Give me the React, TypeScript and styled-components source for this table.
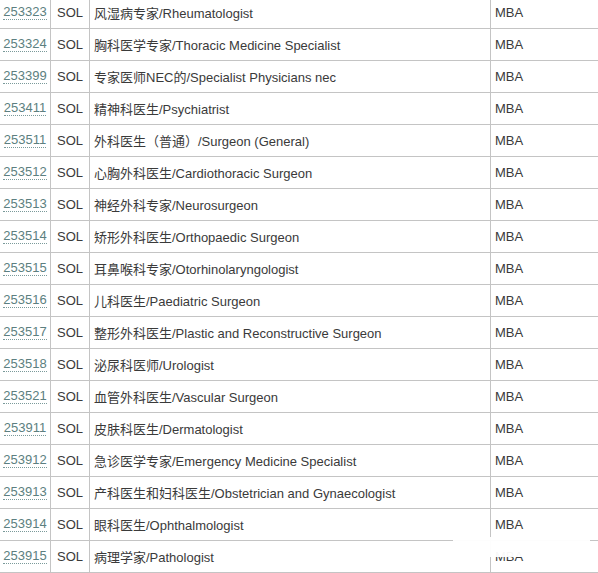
import styled, { createGlobalStyle } from 'styled-components';

const GlobalStyle = createGlobalStyle`
  html, body {
    margin: 0;
    padding: 0;
    background: #fff;
    overflow: hidden;
  }
`;

const Page = styled.div`
  position: relative;
  width: 598px;
  height: 573px;
  overflow: hidden;
  font-family: 'Liberation Sans', Arial, 'Noto Sans CJK SC', sans-serif;
  font-size: 13px;
  color: #3a3a3a;
`;

const Table = styled.div`
  margin-top: -3px;
  width: 640px;
`;

const Row = styled.div`
  display: grid;
  grid-template-columns: 51px 39px 401px 1fr;
  height: 32px;
  box-sizing: border-box;
  border-bottom: 1px solid #c4c4c4;
`;

const Cell = styled.div<{ $center?: boolean; $last?: boolean }>`
  display: flex;
  align-items: center;
  justify-content: ${(p) => (p.$center ? 'center' : 'flex-start')};
  padding-left: ${(p) => (p.$center ? '0' : '4px')};
  box-sizing: border-box;
  border-right: ${(p) => (p.$last ? 'none' : '1px solid #c4c4c4')};
  white-space: nowrap;
`;

const Code = styled.a`
  color: #5c7f80;
  text-decoration: none;
  border-bottom: 1px dotted #7a9a9a;
  line-height: 14px;
`;

const Watermark = styled.div`
  position: absolute;
  left: 453px;
  top: 537px;
  width: 137px;
  height: 20px;
  background: rgba(255, 255, 255, 0.96);
`;

type Occupation = {
  code: string;
  list: string;
  title: string;
  visa: string;
};

const occupations: Occupation[] = [
  { code: '253323', list: 'SOL', title: '风湿病专家/Rheumatologist', visa: 'MBA' },
  { code: '253324', list: 'SOL', title: '胸科医学专家/Thoracic Medicine Specialist', visa: 'MBA' },
  { code: '253399', list: 'SOL', title: '专家医师NEC的/Specialist Physicians nec', visa: 'MBA' },
  { code: '253411', list: 'SOL', title: '精神科医生/Psychiatrist', visa: 'MBA' },
  { code: '253511', list: 'SOL', title: '外科医生（普通）/Surgeon (General)', visa: 'MBA' },
  { code: '253512', list: 'SOL', title: '心胸外科医生/Cardiothoracic Surgeon', visa: 'MBA' },
  { code: '253513', list: 'SOL', title: '神经外科专家/Neurosurgeon', visa: 'MBA' },
  { code: '253514', list: 'SOL', title: '矫形外科医生/Orthopaedic Surgeon', visa: 'MBA' },
  { code: '253515', list: 'SOL', title: '耳鼻喉科专家/Otorhinolaryngologist', visa: 'MBA' },
  { code: '253516', list: 'SOL', title: '儿科医生/Paediatric Surgeon', visa: 'MBA' },
  { code: '253517', list: 'SOL', title: '整形外科医生/Plastic and Reconstructive Surgeon', visa: 'MBA' },
  { code: '253518', list: 'SOL', title: '泌尿科医师/Urologist', visa: 'MBA' },
  { code: '253521', list: 'SOL', title: '血管外科医生/Vascular Surgeon', visa: 'MBA' },
  { code: '253911', list: 'SOL', title: '皮肤科医生/Dermatologist', visa: 'MBA' },
  { code: '253912', list: 'SOL', title: '急诊医学专家/Emergency Medicine Specialist', visa: 'MBA' },
  { code: '253913', list: 'SOL', title: '产科医生和妇科医生/Obstetrician and Gynaecologist', visa: 'MBA' },
  { code: '253914', list: 'SOL', title: '眼科医生/Ophthalmologist', visa: 'MBA' },
  { code: '253915', list: 'SOL', title: '病理学家/Pathologist', visa: 'MBA' },
];

const App = () => {
  return (
    <>
      <GlobalStyle />
      <Page>
        <Table>
          {occupations.map((o) => (
            <Row key={o.code}>
              <Cell $center>
                <Code href="#">{o.code}</Code>
              </Cell>
              <Cell $center>{o.list}</Cell>
              <Cell>{o.title}</Cell>
              <Cell $last>{o.visa}</Cell>
            </Row>
          ))}
        </Table>
        <Watermark />
      </Page>
    </>
  );
};

export default App;
